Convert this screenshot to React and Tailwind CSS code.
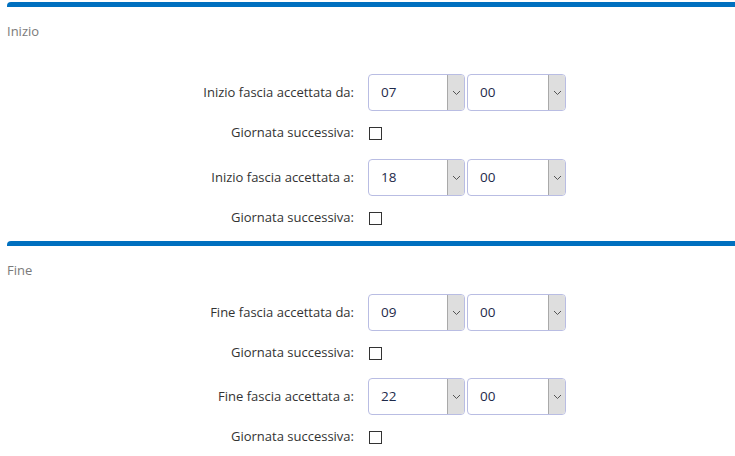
import React from "react";

function Chevron() {
  return (
    <svg width="9" height="6" viewBox="0 0 9 6" className="block">
      <path d="M1 1 L4.5 4.5 L8 1" fill="none" stroke="#555" strokeWidth="1" />
    </svg>
  );
}

function Select({ value, width }) {
  return (
    <div
      className="flex h-[37px] rounded-[4px] border border-[#b9bde3] bg-white overflow-hidden"
      style={{ width }}
    >
      <div className="flex-1 flex items-center pl-[12px] text-[13.5px] text-[#1e2a4a]">{value}</div>
      <div className="w-[17px] h-full bg-[#dedede] border-l border-[#a9a9a9] flex items-center justify-center">
        <Chevron />
      </div>
    </div>
  );
}

function SelectRow({ label, h, m }) {
  return (
    <div className="flex items-center h-[37px]">
      <div className="w-[354px] pr-0 text-right text-[13px] text-[#333]">{label}</div>
      <div className="ml-[14px] flex gap-[2px]">
        <Select value={h} width={97} />
        <Select value={m} width={99} />
      </div>
    </div>
  );
}

function CheckRow() {
  return (
    <div className="flex items-center h-[44px]">
      <div className="w-[354px] text-right text-[13px] text-[#333]">Giornata successiva:</div>
      <div className="ml-[15px] w-[13px] h-[13px] border border-[#333] bg-white"></div>
    </div>
  );
}

function Bar() {
  return <div className="ml-[7px] h-[5px] bg-[#0070bf] rounded-tl-[4px]"></div>;
}

export default function App() {
  return (
    <div className="w-[735px] h-[456px] bg-white overflow-hidden" style={{ fontFamily: '"Open Sans", sans-serif' }}>
      <div className="pt-[2px]">
        <Bar />
        <div className="pl-[7px] pt-[15px] h-[67px] text-[13px] text-[#7a7a7a]">Inizio</div>
        <SelectRow label="Inizio fascia accettata da:" h="07" m="00" />
        <CheckRow />
        <div className="mt-[4px]">
          <SelectRow label="Inizio fascia accettata a:" h="18" m="00" />
        </div>
        <CheckRow />
        <div className="mt-[1px]">
          <Bar />
        </div>
        <div className="pl-[7px] pt-[15px] h-[48px] text-[13px] text-[#7a7a7a]">Fine</div>
        <SelectRow label="Fine fascia accettata da:" h="09" m="00" />
        <CheckRow />
        <div className="mt-[3px]">
          <SelectRow label="Fine fascia accettata a:" h="22" m="00" />
        </div>
        <CheckRow />
      </div>
    </div>
  );
}
